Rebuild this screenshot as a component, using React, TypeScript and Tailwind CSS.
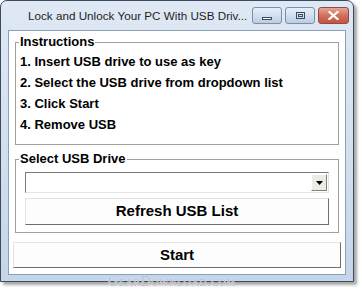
import React from 'react';

const font = { fontFamily: '"Liberation Sans", Arial, sans-serif' };

const CaptionButton: React.FC<{ kind: 'min' | 'max' | 'close' }> = ({ kind }) => {
  if (kind === 'close') {
    return (
      <div className="w-[31px] h-[17px] rounded-[3px] border border-[#8a4e48] bg-gradient-to-b from-[#e8a394] via-[#d2705d] to-[#c2553f] flex items-center justify-center">
        <svg width="11" height="9" viewBox="0 0 11 9">
          <path d="M1.5 1 L9.5 8 M9.5 1 L1.5 8" stroke="#ffffff" strokeWidth="2.2" strokeLinecap="square" />
        </svg>
      </div>
    );
  }
  return (
    <div className="w-[30px] h-[17px] rounded-[3px] border border-[#7c8ea8] bg-gradient-to-b from-[#e6eef8] via-[#d2dfef] to-[#bccde4] flex items-center justify-center">
      {kind === 'min' ? (
        <div className="w-[10px] h-[3px] border border-[#3c4a5e] bg-white mt-[5px]" />
      ) : (
        <div className="w-[9px] h-[7px] border border-[#3c4a5e] flex items-center justify-center">
          <div className="w-[5px] h-[3px] border border-[#3c4a5e]" />
        </div>
      )}
    </div>
  );
};

const GroupBox: React.FC<{ label: string; className?: string; children: React.ReactNode }> = ({
  label,
  className,
  children
}) => (
  <div className={`relative border border-[#a0a0a0] shadow-[inset_1px_1px_0_#fff] ${className ?? ''}`}>
    <span className="absolute -top-[9px] left-[3px] bg-white px-[1px] text-[13px] leading-[16px] font-bold text-black whitespace-nowrap">
      {label}
    </span>
    {children}
  </div>
);

export default function App() {
  return (
    <div className="w-[362px] h-[289px] bg-white relative overflow-hidden" style={font}>
      <div className="w-[354px] h-[282px] rounded-t-[7px] border border-[#3c4a5c] bg-gradient-to-b from-[#dfe9f5] via-[#d3e0ef] to-[#c5d6ea] shadow-[3px_3px_3px_rgba(0,0,0,0.35)] flex flex-col">
        <div className="h-[29px] flex items-start pl-[27px] pr-[4px] pt-[4px]">
          <div className="flex-1 text-[11.7px] leading-[20px] text-[#1e1e1e] mt-[1px] whitespace-nowrap">
            Lock and Unlock Your PC With USB Driv...
          </div>
          <div className="flex gap-[3px] pt-[2px]">
            <CaptionButton kind="min" />
            <CaptionButton kind="max" />
            <CaptionButton kind="close" />
          </div>
        </div>
        <div className="mx-[7px] h-[245px] border border-[#8aa0b8] bg-white px-[5px] pt-[11px] flex flex-col">
          <GroupBox label="Instructions" className="mx-[1px] h-[103px] pt-[11px] pl-[4px]">
            <div className="flex flex-col gap-[5px] text-[13px] leading-[16px] font-bold text-black">
              <div>1. Insert USB drive to use as key</div>
              <div>2. Select the USB drive from dropdown list</div>
              <div>3. Click Start</div>
              <div>4. Remove USB</div>
            </div>
          </GroupBox>
          <GroupBox label="Select USB Drive" className="mx-[1px] mt-[14px] h-[74px] px-[9px] pt-[12px]">
            <div className="h-[21px] border border-[#7a7a7a] border-b-[#e3e3e3] border-r-[#e3e3e3] bg-white flex justify-end items-center pr-[1px]">
              <div className="w-[16px] h-[17px] bg-[#ecebe6] border border-white border-r-[#808080] border-b-[#808080] flex items-center justify-center">
                <svg width="7" height="4" viewBox="0 0 7 4">
                  <path d="M0 0 H7 L3.5 4 Z" fill="#000" />
                </svg>
              </div>
            </div>
            <button className="mt-[5px] w-full h-[27px] bg-[#fdfdfd] border border-[#e3e3e3] border-r-[#6e6e6e] border-b-[#6e6e6e] text-[15px] font-bold text-black">
              Refresh USB List
            </button>
          </GroupBox>
          <button className="mt-[9px] -mx-[1px] h-[26px] bg-[#fdfdfd] border border-[#e3e3e3] border-r-[#6e6e6e] border-b-[#6e6e6e] text-[15px] font-bold text-black">
            Start
          </button>
        </div>
      </div>
      <div
        className="absolute left-[108px] top-[275px] text-[14px] leading-[14px] tracking-[0.6px] text-[#b4bcc6] [text-shadow:0_0_1px_#ffffff]"
        style={{ fontFamily: '"Liberation Serif", serif', fontVariant: 'small-caps' }}
      >
        GearDownload.com
      </div>
    </div>
  );
}
